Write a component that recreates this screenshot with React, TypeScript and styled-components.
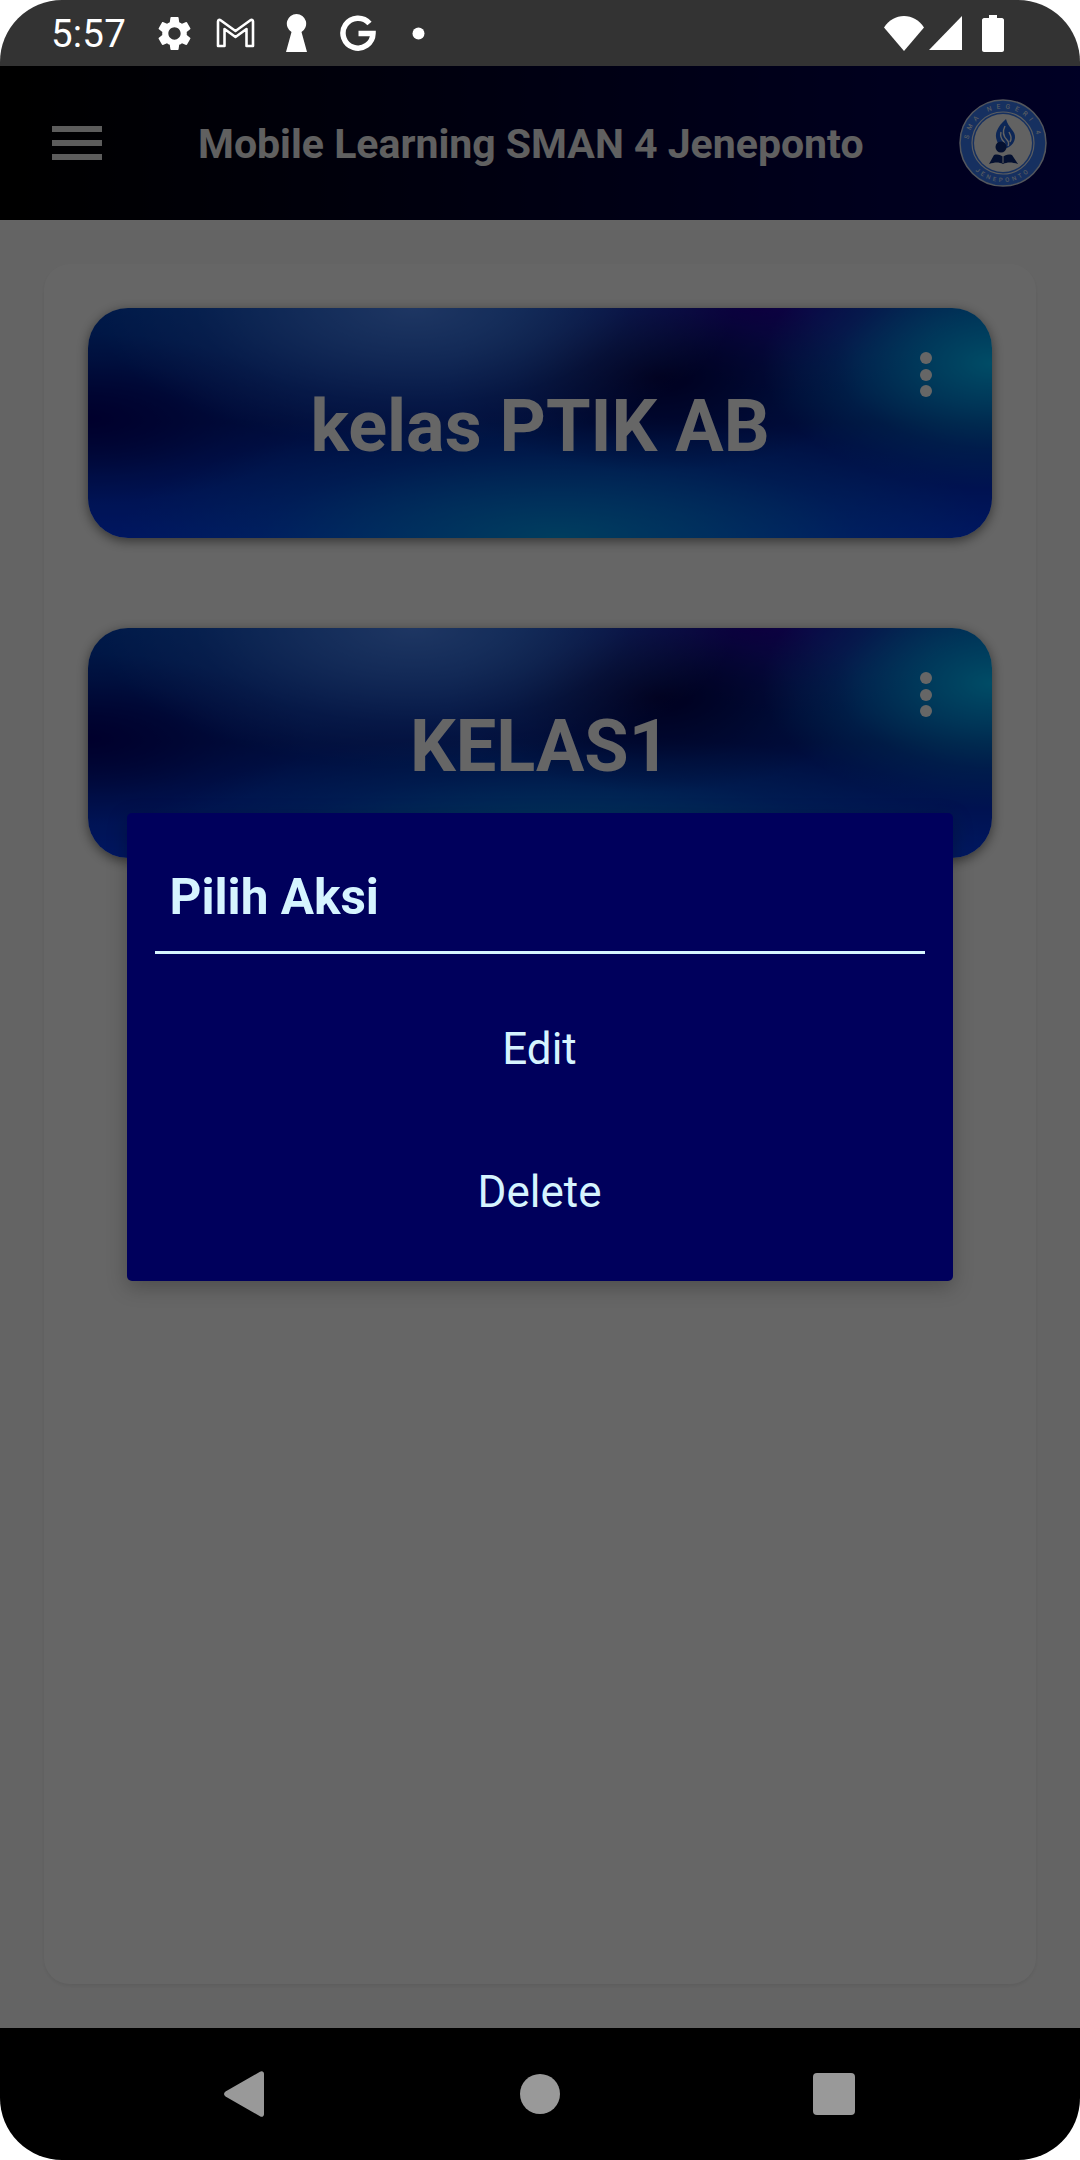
import styled, { createGlobalStyle } from 'styled-components'
import { MdSettings } from 'react-icons/md'

const Global = createGlobalStyle`
  html, body {
    margin: 0;
    padding: 0;
    background: #fff;
  }
  * {
    box-sizing: border-box;
  }
`

// soft blob for the card background, fades out without a visible edge
const glow = (x: number, y: number, rx: number, ry: number, rgb: string, a: number) =>
  `radial-gradient(ellipse ${rx}px ${ry}px at ${x}% ${y}%, rgba(${rgb}, ${a}) 0%, rgba(${rgb}, ${a * 0.62}) 35%, rgba(${rgb}, ${a * 0.22}) 68%, rgba(${rgb}, 0) 100%)`

const cardBackground = [
  glow(100, 24, 230, 125, '0, 190, 255', 1),
  glow(36, 0, 320, 140, '80, 140, 250', 0.95),
  glow(63, 30, 210, 95, '0, 0, 75', 1),
  glow(74, 0, 260, 95, '35, 0, 165', 1),
  glow(52, 100, 440, 125, '0, 165, 235', 0.9),
  glow(0, 48, 220, 85, '0, 0, 110', 1),
  'linear-gradient(180deg, #0040b4 0%, #002296 50%, #0038f0 100%)',
].join(', ')

const Phone = styled.div`
  width: 1080px;
  height: 2160px;
  display: flex;
  flex-direction: column;
  border-radius: 62px;
  overflow: hidden;
  font-family: Roboto, "Liberation Sans", sans-serif;
`

const StatusBar = styled.div`
  height: 66px;
  flex: none;
  background: #333;
  color: #fff;
  display: flex;
  align-items: center;
  justify-content: space-between;
  padding: 0 76px 0 51px;
`

const StatusGroup = styled.div`
  display: flex;
  align-items: center;
`

const Clock = styled.span`
  font-size: 38.5px;
  line-height: 66px;
  width: 103px;
  padding-top: 1px;
  letter-spacing: 0.2px;
`

const StatusIcon = styled.svg<{ $gap?: number }>`
  display: block;
  flex: none;
  margin-right: ${(p) => p.$gap ?? 0}px;
`

const Screen = styled.div`
  flex: 1;
  position: relative;
  display: flex;
  flex-direction: column;
`

const AppBar = styled.header`
  height: 154px;
  flex: none;
  background: linear-gradient(90deg, #000 0%, #00005c 100%);
  display: flex;
  align-items: center;
  padding: 0 33px 0 52px;
`

const MenuButton = styled.div`
  width: 50px;
  height: 34px;
  flex: none;
  display: flex;
  flex-direction: column;
  justify-content: space-between;
  margin: 0 96px 0 0;
`

const MenuLine = styled.span`
  height: 6px;
  background: #e6e6e6;
`

const Title = styled.h1`
  flex: 1;
  margin: 0;
  padding-top: 2px;
  color: #f0f0f0;
  font-size: 41px;
  font-weight: 700;
  white-space: nowrap;
`

const Main = styled.main`
  flex: 1;
  background: #fbfbfb;
  padding: 44px;
  display: flex;
`

const Panel = styled.section`
  flex: 1;
  background: #fff;
  border-radius: 26px;
  box-shadow: 0 2px 4px rgba(0, 0, 0, 0.08);
  padding: 44px;
  display: flex;
  flex-direction: column;
  gap: 90px;
`

const ClassCard = styled.article`
  position: relative;
  height: 230px;
  border-radius: 40px;
  display: flex;
  align-items: center;
  justify-content: center;
  padding-top: 6px;
  box-shadow: 0 3px 12px rgba(0, 0, 0, 0.5);
  background: ${cardBackground};
`

const CardName = styled.h2`
  margin: 0;
  color: #fff;
  font-size: 72px;
  font-weight: 700;
  white-space: nowrap;
`

const CardMenu = styled.div`
  position: absolute;
  top: 44px;
  right: 60px;
  display: flex;
  flex-direction: column;
  gap: 4.5px;
`

const CardDot = styled.span`
  width: 12px;
  height: 12px;
  border-radius: 50%;
  background: #fff;
`

const Scrim = styled.div`
  position: absolute;
  inset: 0;
  background: rgba(0, 0, 0, 0.6);
  display: flex;
  align-items: center;
  justify-content: center;
`

const Dialog = styled.div`
  width: 826px;
  height: 468px;
  margin-right: 1px;
  background: #00005c;
  border-radius: 5px;
  box-shadow: 0 6px 20px rgba(0, 0, 0, 0.25);
  color: #d6f4ff;
  display: flex;
  flex-direction: column;
  padding: 0 28px 18px;
`

const DialogTitle = styled.h3`
  margin: 0;
  height: 141px;
  flex: none;
  display: flex;
  align-items: center;
  padding: 30px 0 0 15px;
  font-size: 49.5px;
  font-weight: 700;
  border-bottom: 3px solid #d6f4ff;
`

const DialogActions = styled.div`
  flex: 1;
  display: flex;
  flex-direction: column;
  padding-top: 23px;
`

const DialogAction = styled.div`
  height: 143px;
  display: flex;
  align-items: center;
  justify-content: center;
  font-size: 44px;
`

const NavBar = styled.nav`
  height: 132px;
  flex: none;
  background: #000;
  display: flex;
  align-items: center;
`

const NavSlot = styled.div<{ $width: number }>`
  width: ${(p) => p.$width}px;
  display: flex;
  justify-content: flex-end;
`

const NavIcon = styled.svg`
  display: block;
  fill: #999;
`

const Logo = () => (
  <svg width="88" height="88" viewBox="0 0 88 88">
    <defs>
      <path id="top-arc" d="M9.500 44a34.500 34.500 0 0 1 69 0" />
      <path id="bottom-arc" d="M5 44a39 39 0 0 0 78 0" />
    </defs>
    <circle cx="44" cy="44" r="43" fill="#3779f0" stroke="#cfd6e6" strokeWidth="1.500" />
    <circle cx="44" cy="44" r="29" fill="#f4f4f4" />
    <circle cx="44" cy="44" r="31" fill="none" stroke="#e4e8f0" strokeWidth="1.200" />
    <text fontFamily="Roboto, sans-serif" fontSize="6.500" fill="#f2f2f2" letterSpacing="4.800">
      <textPath href="#top-arc" startOffset="50%" textAnchor="middle">SMA NEGERI 4</textPath>
    </text>
    <text fontFamily="Roboto, sans-serif" fontSize="6" fill="#f2f2f2" letterSpacing="3">
      <textPath href="#bottom-arc" startOffset="50%" textAnchor="middle">JENEPONTO</textPath>
    </text>
    <path d="M47 20c-9 8-12 15-9 22 2 4 1 7 0 9 9 0 17-4 18-12 1-7-7-10-9-19z" fill="#1f5fd8" />
    <path d="M46 27c-3 6-2 10 2 14 2 2 2 4 1 6M50 33c2 4 3 6 1 10M42 33c-1 4 0 7 3 10 1 2 1 4 0 5" fill="none" stroke="#f4f4f4" strokeWidth="1.400" />
    <circle cx="42" cy="48" r="5.500" fill="#0a2a78" />
    <path d="M30 65l5-9c4-1 7 0 9 2 2-2 5-3 9-2l6 9c-6-2-11-2-15 0-4-2-8-2-14 0z" fill="#0a2a78" />
    <path d="M44 58v6" stroke="#f4f4f4" strokeWidth="1" />
  </svg>
)

const classes = ['kelas PTIK AB', 'KELAS1']

const App = () => {
  return (
    <>
      <Global />
      <Phone>
        <StatusBar>
          <StatusGroup>
            <Clock>5:57</Clock>
            <StatusIcon as={MdSettings} size={41} color="#fff" $gap={21} />
            <StatusIcon width="39" height="30" viewBox="0 0 39 30" $gap={31}>
              <path
                d="M2 28V3.500C2 2 3.500 1.500 4.600 2.300L19.500 13 34.400 2.300C35.500 1.500 37 2 37 3.500V28H30.500V11L19.500 19 8.500 11V28Z"
                fill="none"
                stroke="#fff"
                strokeWidth="2.600"
                strokeLinejoin="round"
              />
            </StatusIcon>
            <StatusIcon width="21" height="38" viewBox="0 0 21 38" $gap={33}>
              <path d="M10.500 0a9.700 9.700 0 0 1 5 18L21 38H0l5.500-20a9.700 9.700 0 0 1 5-18z" fill="#fff" />
            </StatusIcon>
            <StatusIcon width="36" height="36" viewBox="0 0 36 36" $gap={36}>
              <path
                d="M29.500 8.500A15 15 0 1 0 33 18.500H18.500"
                fill="none"
                stroke="#fff"
                strokeWidth="5.500"
              />
            </StatusIcon>
            <StatusIcon width="13" height="13" viewBox="0 0 13 13">
              <circle cx="6.500" cy="6.500" r="6" fill="#fff" />
            </StatusIcon>
          </StatusGroup>
          <StatusGroup>
            <StatusIcon width="40" height="35" viewBox="0 0 40 35" $gap={5}>
              <path d="M0 11.500C5 4 12 0 20 0s15 4 20 11.500L20 35Z" fill="#fff" />
            </StatusIcon>
            <StatusIcon width="33" height="34" viewBox="0 0 33 34" $gap={20}>
              <path d="M33 0v34H0Z" fill="#fff" />
            </StatusIcon>
            <StatusIcon width="22" height="37" viewBox="0 0 22 37">
              <path d="M7 0h8v3h5c1 0 2 1 2 2v30c0 1-1 2-2 2H2c-1 0-2-1-2-2V5c0-1 1-2 2-2h5Z" fill="#fff" />
            </StatusIcon>
          </StatusGroup>
        </StatusBar>
        <Screen>
          <AppBar>
            <MenuButton>
              <MenuLine />
              <MenuLine />
              <MenuLine />
            </MenuButton>
            <Title>Mobile Learning SMAN 4 Jeneponto</Title>
            <Logo />
          </AppBar>
          <Main>
            <Panel>
              {classes.map((name) => (
                <ClassCard key={name}>
                  <CardName>{name}</CardName>
                  <CardMenu>
                    <CardDot />
                    <CardDot />
                    <CardDot />
                  </CardMenu>
                </ClassCard>
              ))}
            </Panel>
          </Main>
          <Scrim>
            <Dialog>
              <DialogTitle>Pilih Aksi</DialogTitle>
              <DialogActions>
                <DialogAction>Edit</DialogAction>
                <DialogAction>Delete</DialogAction>
              </DialogActions>
            </Dialog>
          </Scrim>
        </Screen>
        <NavBar>
          <NavSlot $width={264}>
            <NavIcon width="40" height="46" viewBox="0 0 40 46">
              <path d="M36 .8c2-1.500 4 0 4 2v40.400c0 2-2 3.500-4 2L1.500 25.500c-2-1.500-2-3.500 0-5Z" />
            </NavIcon>
          </NavSlot>
          <NavSlot $width={296}>
            <NavIcon width="40" height="40" viewBox="0 0 40 40">
              <circle cx="20" cy="20" r="20" />
            </NavIcon>
          </NavSlot>
          <NavSlot $width={295}>
            <NavIcon width="42" height="42" viewBox="0 0 42 42">
              <rect width="42" height="42" rx="4" />
            </NavIcon>
          </NavSlot>
        </NavBar>
      </Phone>
    </>
  )
}

export default App
